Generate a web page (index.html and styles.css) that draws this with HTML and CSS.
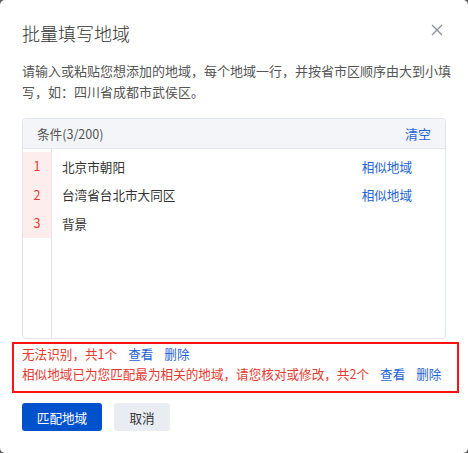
FILE: index.html
```html
<!DOCTYPE html>
<html lang="zh-CN">
<head>
<meta charset="utf-8">
<link rel="stylesheet" href="styles.css">
</head>
<body>
<div class="dialog">
  <div class="dlg-head">
    <div class="title">批量填写地域</div>
    <svg class="close" width="12" height="12" viewBox="0 0 12 12"><path d="M1 1L11 11M11 1L1 11" stroke="#8a9099" stroke-width="1.3" fill="none"/></svg>
  </div>
  <p class="desc">请输入或粘贴您想添加的地域，每个地域一行，并按省市区顺序由大到小填写，如：四川省成都市武侯区。</p>
  <div class="box">
    <div class="box-head">
      <span>条件(3/200)</span>
      <a class="link">清空</a>
    </div>
    <div class="box-body">
      <div class="gutter">
        <div class="num">1</div>
        <div class="num">2</div>
        <div class="num">3</div>
      </div>
      <div class="lines">
        <div class="line"><span>北京市朝阳</span><a class="link">相似地域</a></div>
        <div class="line"><span>台湾省台北市大同区</span><a class="link">相似地域</a></div>
        <div class="line"><span>背景</span></div>
      </div>
    </div>
  </div>
  <div class="errors">
    <div class="err">无法识别，共1个<a class="link">查看</a><a class="link">删除</a></div>
    <div class="err">相似地域已为您匹配最为相关的地域，请您核对或修改，共2个<a class="link">查看</a><a class="link">删除</a></div>
  </div>
  <div class="actions">
    <button class="btn primary">匹配地域</button>
    <button class="btn">取消</button>
  </div>
</div>
</body>
</html>
```

FILE: styles.css
```css
* { box-sizing: border-box; }
html, body { margin: 0; padding: 0; }
body {
  background: #5c5c5c;
  font-family: "Noto Sans CJK SC", "Noto Sans", sans-serif;
  width: 468px;
  height: 453px;
  overflow: hidden;
}
.dialog {
  width: 468px;
  height: 453px;
  background: #fff;
  border-radius: 5px;
  padding: 21px 22px 0 22px;
  display: flex;
  flex-direction: column;
}
.dlg-head {
  display: flex;
  justify-content: space-between;
  align-items: center;
  height: 24px;
}
.title {
  font-size: 18px;
  font-weight: 300;
  line-height: 24px;
  color: #333;
}
.close { margin-right: 3px; margin-top: -7px; }
.desc {
  margin: 15px -8px 0 0;
  font-size: 13px;
  line-height: 21px;
  color: #555;
}
.box {
  margin-top: 16px;
  height: 221px;
  border: 1px solid #e1e5ee;
  border-radius: 4px;
  display: flex;
  flex-direction: column;
  overflow: hidden;
}
.box-head {
  height: 30px;
  flex: none;
  background: #f4f5f9;
  border-bottom: 1px solid #e1e5ee;
  display: flex;
  justify-content: space-between;
  align-items: center;
  padding: 0 14px 0 14px;
  font-size: 12.6px;
  color: #555;
}
.link { color: #1d63d6; cursor: pointer; }
.box-head .link { font-size: 13px; }
.box-body {
  flex: 1;
  display: flex;
}
.gutter {
  width: 29px;
  border-right: 1px solid #e1e5ee;
  padding-top: 3px;
}
.num {
  height: 28.5px;
  line-height: 28.5px;
  background: #fdeeed;
  color: #e5392f;
  font-size: 12.6px;
  text-align: center;
}
.lines {
  flex: 1;
  padding: 3px 33px 0 10px;
}
.line {
  height: 28.5px;
  display: flex;
  justify-content: space-between;
  align-items: center;
  font-size: 12.6px;
  color: #333;
}
.errors {
  margin: 3px -13px 0 -10px;
  border: 2px solid #ff1111;
  padding: 0 0 7px 8px;
}
.err {
  font-size: 12.6px;
  line-height: 20px;
  color: #e5392f;
}
.err .link { margin-left: 11px; }
.actions {
  margin-top: 10px;
  display: flex;
  gap: 12px;
}
.btn {
  height: 28px;
  border: none;
  border-radius: 3px;
  font-family: inherit;
  font-size: 12.6px;
  padding: 0;
  width: 56px;
  background: #e9ecf3;
  color: #333;
}
.btn.primary {
  width: 80px;
  background: #0052cc;
  color: #fff;
}
```
